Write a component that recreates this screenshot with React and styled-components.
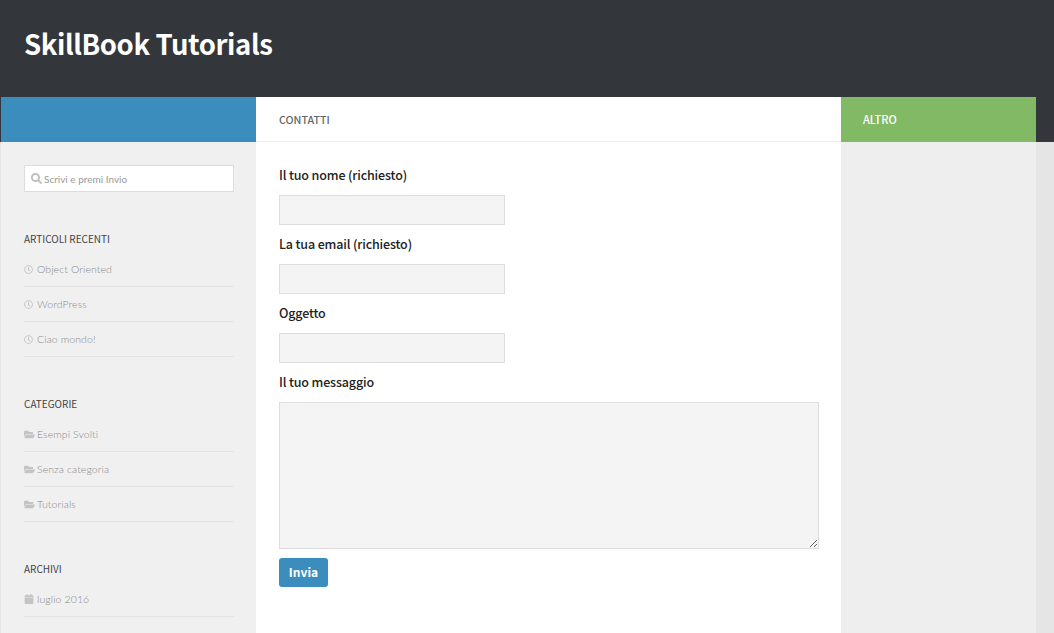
import React from "react";
import styled, { createGlobalStyle } from "styled-components";
import { FaSearch, FaRegClock, FaFolderOpen, FaCalendar } from "react-icons/fa";

const sans = `"Noto Sans CJK SC", "Noto Sans", sans-serif`;
const thin = `Lato, "Open Sans", sans-serif`;

const GlobalStyle = createGlobalStyle`
  html, body {
    margin: 0;
    padding: 0;
    height: 100%;
    overflow: hidden;
    background: #e5e5e5;
  }
  * {
    box-sizing: border-box;
  }
`;

const Page = styled.div`
  height: 633px;
  overflow: hidden;
`;

const Header = styled.header`
  height: 97px;
  background: #33363b;
  padding: 23px 24px 0;
`;

const SiteTitle = styled.h1`
  margin: 0;
  color: #fff;
  font-family: ${sans};
  font-size: 27.5px;
  font-weight: 700;
  line-height: 41px;
  letter-spacing: -0.4px;
`;

const Columns = styled.div`
  display: flex;
  height: 536px;
`;

const Gutter = styled.div`
  display: flex;
  flex-direction: column;
  flex: ${(p) => (p.$grow ? "1" : "0 0 1px")};
`;

const GutterHead = styled.div`
  flex: 0 0 45px;
  background: #33363b;
`;

const GutterBody = styled.div`
  flex: 1;
  background: #e5e5e5;
`;

const LeftColumn = styled.aside`
  flex: 0 0 255px;
  display: flex;
  flex-direction: column;
  background: #f0f0f0;
`;

const BlueBar = styled.div`
  flex: 0 0 45px;
  background: #3b8dbd;
`;

const SideInner = styled.div`
  padding: 23px 22px 0 23px;
`;

const SearchBox = styled.div`
  display: flex;
  align-items: center;
  gap: 2px;
  height: 27px;
  padding-left: 6px;
  background: #fff;
  border: 1px solid #ddd;
  color: #bbb;
  margin-bottom: 39px;
`;

const SearchHint = styled.span`
  color: #999;
  font-family: ${thin};
  font-size: 10px;
`;

const Widget = styled.section`
  margin-bottom: 39px;
`;

const WidgetTitle = styled.h3`
  margin: 0 0 5px;
  color: #444;
  font-family: ${sans};
  font-size: 10px;
  font-weight: 400;
  line-height: 16px;
  text-transform: uppercase;
`;

const WidgetList = styled.ul`
  list-style: none;
  margin: 0;
  padding: 0;
`;

const WidgetItem = styled.li`
  display: flex;
  align-items: center;
  height: 35px;
  border-bottom: 1px solid #e4e4e4;
  color: #c4c4c4;
`;

const IconSlot = styled.span`
  display: flex;
  align-items: center;
  width: 13px;
`;

const ItemText = styled.span`
  color: #888;
  font-family: ${thin};
  font-size: 10.5px;
  font-weight: 300;
  letter-spacing: 0.1px;
`;

const MainColumn = styled.main`
  flex: 0 0 585px;
  display: flex;
  flex-direction: column;
  background: #fff;
`;

const MainHead = styled.div`
  flex: 0 0 45px;
  display: flex;
  align-items: center;
  padding-left: 23px;
  border-bottom: 1px solid #eee;
  color: #666;
  font-family: ${sans};
  font-size: 10.7px;
  font-weight: 500;
  text-transform: uppercase;
`;

const Form = styled.form`
  display: flex;
  flex-direction: column;
  align-items: flex-start;
  padding: 23px 22px 0 23px;
`;

const Label = styled.label`
  color: #222;
  font-family: ${sans};
  font-size: 12.5px;
  font-weight: 500;
  line-height: 20px;
  letter-spacing: -0.15px;
  margin-bottom: 10px;
`;

const Input = styled.input`
  display: block;
  width: 226px;
  height: 30px;
  margin-bottom: 9px;
  background: #f4f4f4;
  border: 1px solid #ddd;
  outline: none;
`;

const TextArea = styled.textarea`
  display: block;
  width: 540px;
  height: 147px;
  margin: 0 0 9px;
  background: #f4f4f4;
  border: 1px solid #ddd;
  outline: none;
`;

const Submit = styled.button`
  width: 49px;
  height: 29px;
  padding: 0 0 2px;
  border: none;
  border-radius: 3px;
  background: #3b8dbd;
  color: #fff;
  font-family: ${sans};
  font-size: 12px;
  font-weight: 700;
`;

const RightColumn = styled.aside`
  flex: 0 0 195px;
  display: flex;
  flex-direction: column;
  background: #eee;
`;

const GreenBar = styled.div`
  flex: 0 0 45px;
  padding: 13px 0 0 22px;
  background: #82b965;
  color: #fff;
  font-family: ${sans};
  font-size: 11px;
  font-weight: 500;
  line-height: 18px;
  text-transform: uppercase;
`;

const widgets = [
  {
    title: "Articoli recenti",
    icon: <FaRegClock size={9} />,
    items: ["Object Oriented", "WordPress", "Ciao mondo!"],
  },
  {
    title: "Categorie",
    icon: <FaFolderOpen size={11} />,
    items: ["Esempi Svolti", "Senza categoria", "Tutorials"],
  },
  {
    title: "Archivi",
    icon: <FaCalendar size={10} />,
    items: ["luglio 2016"],
  },
];

const fields = ["Il tuo nome (richiesto)", "La tua email (richiesto)", "Oggetto"];

const App = () => {
  return (
    <Page>
      <GlobalStyle />
      <Header>
        <SiteTitle>SkillBook Tutorials</SiteTitle>
      </Header>
      <Columns>
        <Gutter>
          <GutterHead />
          <GutterBody />
        </Gutter>
        <LeftColumn>
          <BlueBar />
          <SideInner>
            <SearchBox>
              <FaSearch size={11} />
              <SearchHint>Scrivi e premi Invio</SearchHint>
            </SearchBox>
            {widgets.map((w) => (
              <Widget key={w.title}>
                <WidgetTitle>{w.title}</WidgetTitle>
                <WidgetList>
                  {w.items.map((item) => (
                    <WidgetItem key={item}>
                      <IconSlot>{w.icon}</IconSlot>
                      <ItemText>{item}</ItemText>
                    </WidgetItem>
                  ))}
                </WidgetList>
              </Widget>
            ))}
          </SideInner>
        </LeftColumn>
        <MainColumn>
          <MainHead>Contatti</MainHead>
          <Form>
            {fields.map((f) => (
              <React.Fragment key={f}>
                <Label>{f}</Label>
                <Input type="text" />
              </React.Fragment>
            ))}
            <Label>Il tuo messaggio</Label>
            <TextArea />
            <Submit type="button">Invia</Submit>
          </Form>
        </MainColumn>
        <RightColumn>
          <GreenBar>Altro</GreenBar>
        </RightColumn>
        <Gutter $grow>
          <GutterHead />
          <GutterBody />
        </Gutter>
      </Columns>
    </Page>
  );
};

export default App;
